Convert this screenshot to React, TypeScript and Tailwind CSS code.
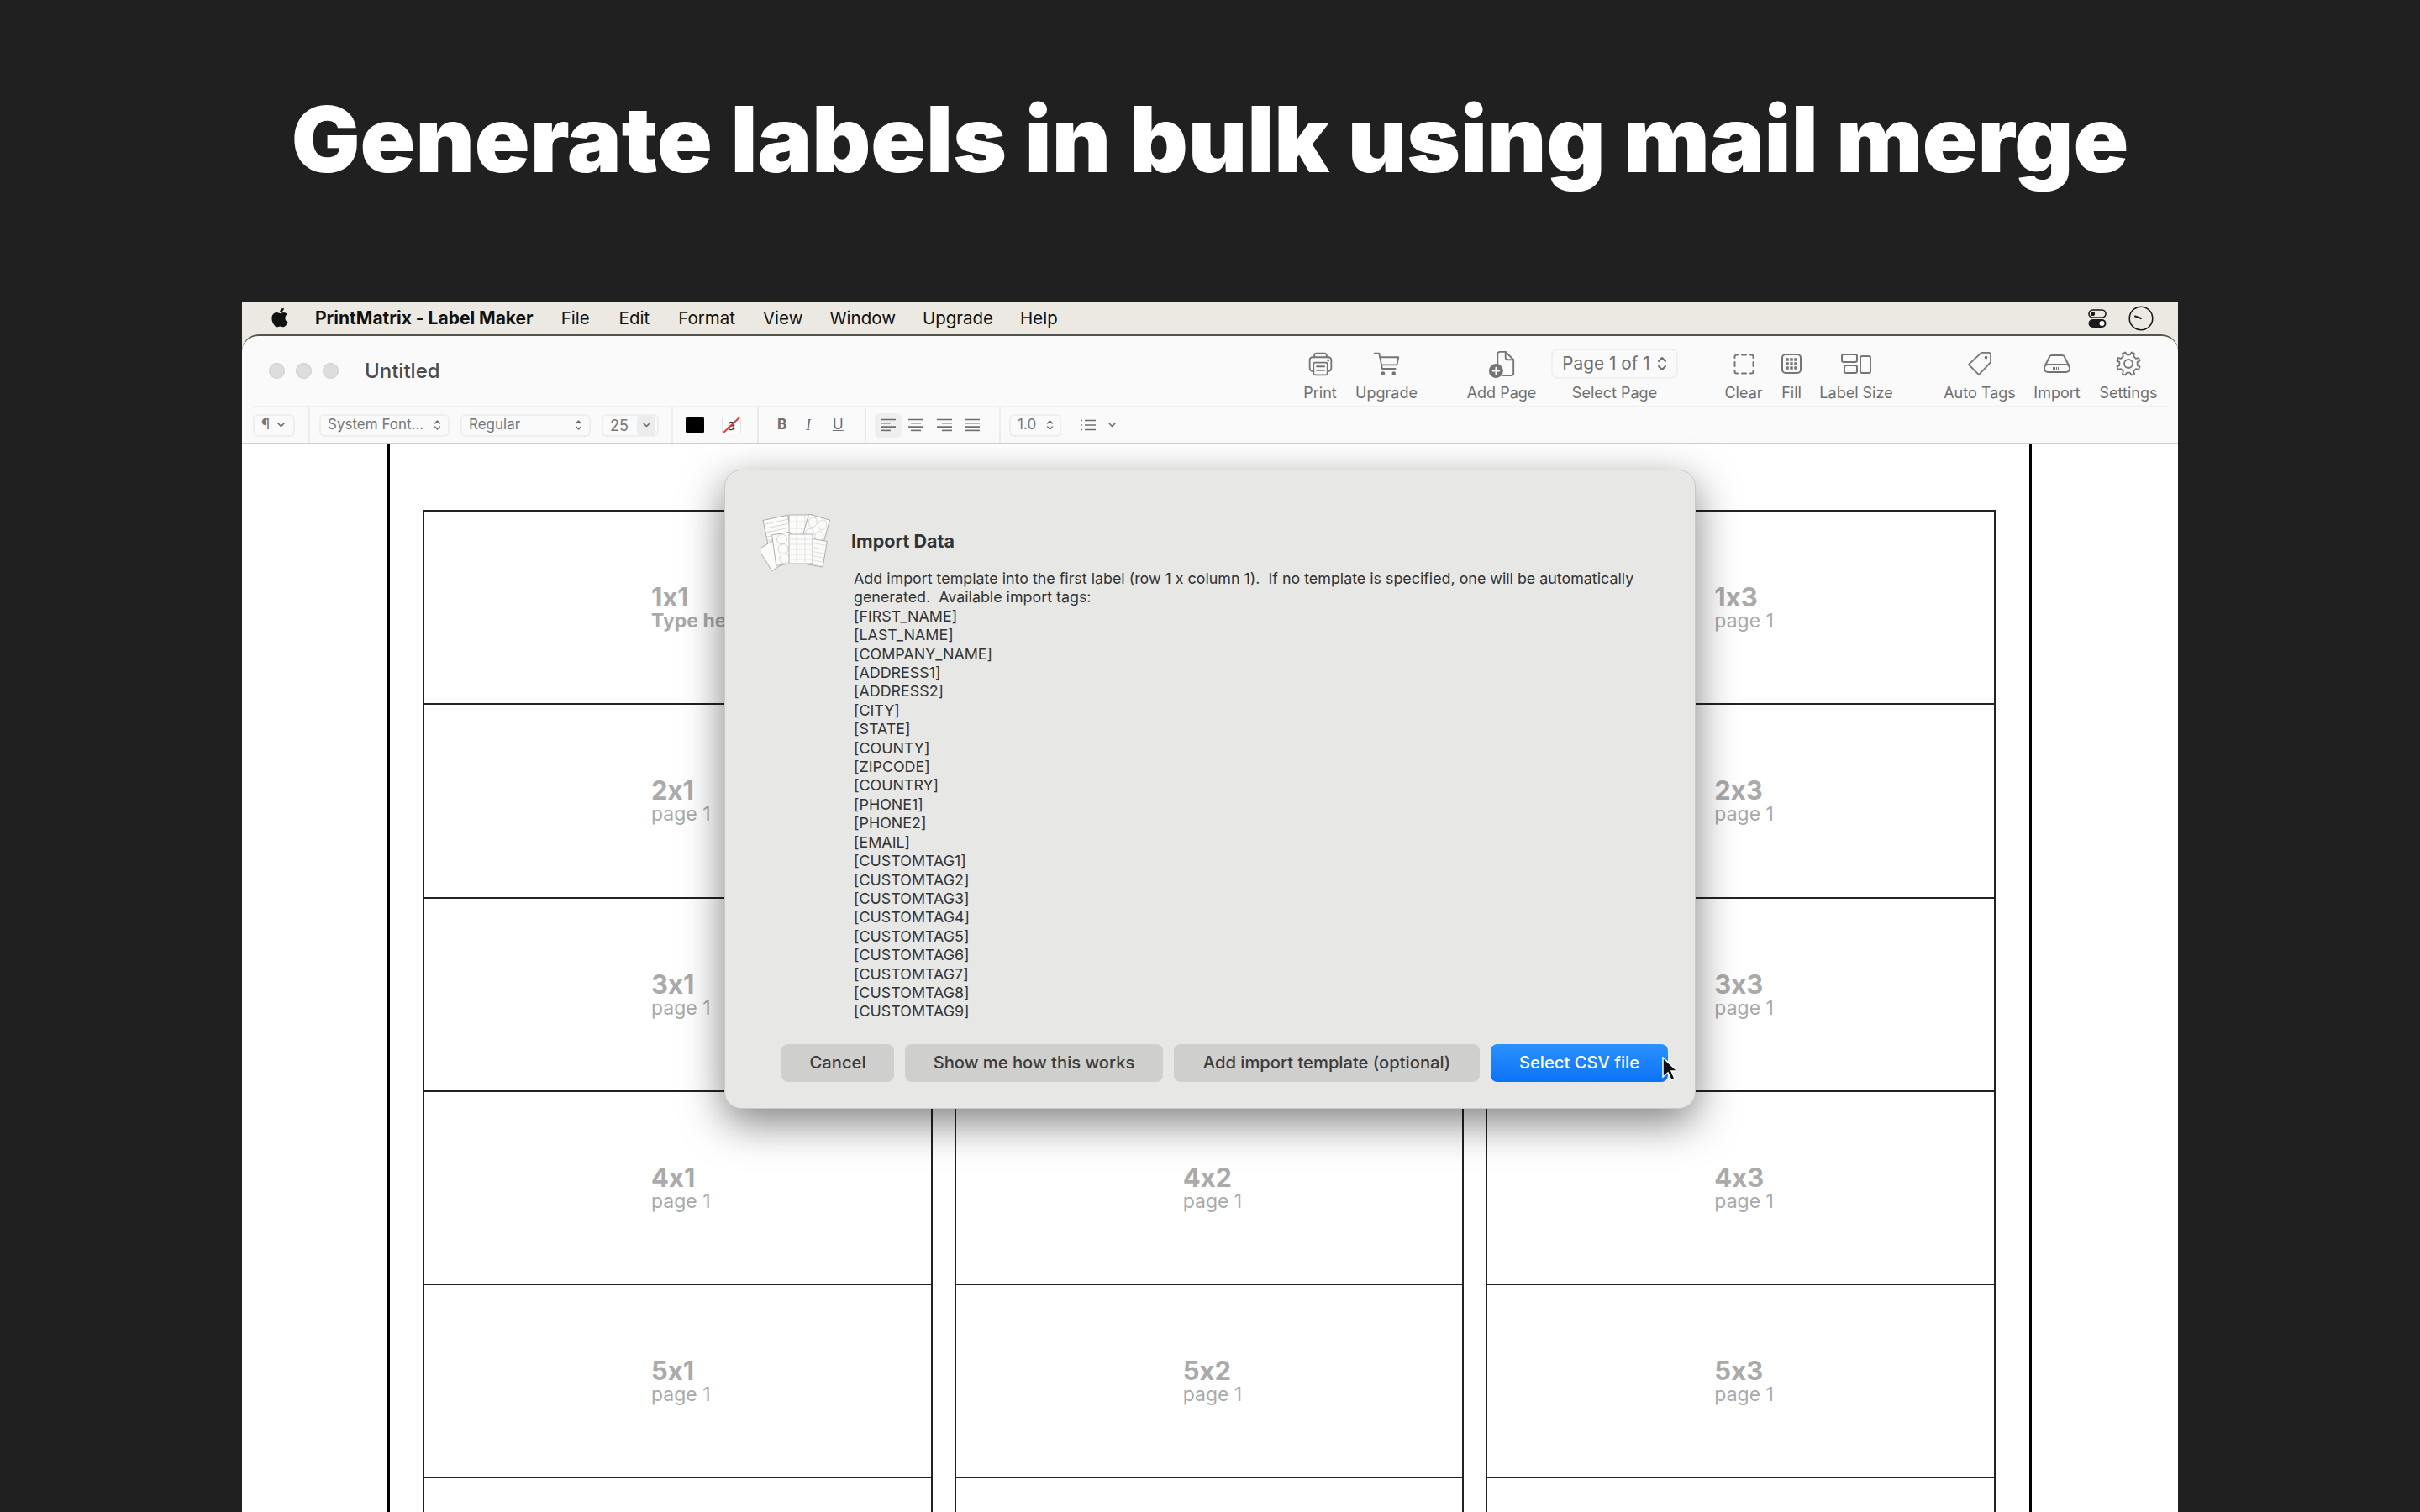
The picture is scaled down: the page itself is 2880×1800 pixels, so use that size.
import { FaApple } from "react-icons/fa";

const sans = "font-['Inter','Liberation_Sans',sans-serif] [font-feature-settings:'calt'_0]";

const menuItems = [
  { name: "File", cls: "ml-[33px]" },
  { name: "Edit", cls: "ml-[35px]" },
  { name: "Format", cls: "ml-[34px]" },
  { name: "View", cls: "ml-[33px]" },
  { name: "Window", cls: "ml-[32px]" },
  { name: "Upgrade", cls: "ml-[32px]" },
  { name: "Help", cls: "ml-[32px]" },
];

const tags = [
  "FIRST_NAME", "LAST_NAME", "COMPANY_NAME", "ADDRESS1", "ADDRESS2", "CITY", "STATE", "COUNTY",
  "ZIPCODE", "COUNTRY", "PHONE1", "PHONE2", "EMAIL", "CUSTOMTAG1", "CUSTOMTAG2", "CUSTOMTAG3",
  "CUSTOMTAG4", "CUSTOMTAG5", "CUSTOMTAG6", "CUSTOMTAG7", "CUSTOMTAG8", "CUSTOMTAG9",
];

const rows = [1, 2, 3, 4, 5];
const cols = [1, 2, 3];

// 8 toothed gear outline, same look as the toolbar's settings symbol
const gearPoints = Array.from({ length: 8 }, (_, i) => {
  const a = (i * Math.PI) / 4 - Math.PI / 8;
  return [
    [10.8, a - 0.22],
    [14, a - 0.13],
    [14, a + 0.13],
    [10.8, a + 0.22],
  ]
    .map(([r, t]) => `${(15 + r * Math.cos(t)).toFixed(2)},${(15 + r * Math.sin(t)).toFixed(2)}`)
    .join(" ");
}).join(" ");

function Stroke({ children, w = 36, h = 36, vb = "0 0 36 36", sw = 2 }: { children: React.ReactNode; w?: number; h?: number; vb?: string; sw?: number }) {
  return (
    <svg width={w} height={h} viewBox={vb} fill="none" stroke="#757575" strokeWidth={sw} strokeLinecap="round" strokeLinejoin="round">
      {children}
    </svg>
  );
}

function UpDown({ small = false }: { small?: boolean }) {
  return (
    <svg width={small ? 9 : 12} height={small ? 14 : 22} viewBox="0 0 12 20" fill="none" stroke="#6a6a6a" strokeWidth={2} strokeLinecap="round" strokeLinejoin="round">
      <path d="M2 7l4-4 4 4M2 13l4 4 4-4" />
    </svg>
  );
}

function Chevron() {
  return (
    <svg width={9} height={6} viewBox="0 0 9 6" fill="none" stroke="#6a6a6a" strokeWidth={1.6} strokeLinecap="round" strokeLinejoin="round">
      <path d="M1 1l3.5 3.5L8 1" />
    </svg>
  );
}

function ToolItem({ label, cls, children }: { label: string; cls: string; children: React.ReactNode }) {
  return (
    <div className={`flex flex-col items-center ${cls}`}>
      <div className="h-[36px] flex items-center justify-center">{children}</div>
      <span className="mt-[5px] text-[18px] leading-[24px] text-[#6f6f6f] whitespace-nowrap">{label}</span>
    </div>
  );
}

function VDivider() {
  return <div className="w-[2px] h-full bg-[#ececec]" />;
}

function Popup({ cls, text, textCls = "text-[17px]", children }: { cls: string; text: string; textCls?: string; children: React.ReactNode }) {
  return (
    <div className={`h-[27px] flex items-center justify-between rounded-[6px] border-2 border-[#efefef] text-[#777777] ${cls}`}>
      <span className={`pl-[8px] whitespace-nowrap ${textCls}`}>{text}</span>
      {children}
    </div>
  );
}

function AlignIcon({ lines }: { lines: [number, number][] }) {
  return (
    <svg width={18} height={18} viewBox="0 0 18 18" stroke="#6e6e6e" strokeWidth={1.6}>
      {lines.map(([a, b], i) => (
        <path key={i} d={`M${a} ${2.5 + i * 4.3}H${b}`} />
      ))}
    </svg>
  );
}

function SheetsIcon() {
  const hLines = [0, 1, 2, 3, 4, 5];
  return (
    <svg width={82} height={68} viewBox="0 0 82 68" stroke="#a0a0a0" strokeWidth={0.8} fill="#fbfbfa">
      <g transform="rotate(-12 20 20)">
        <rect x="5" y="4" width="30" height="34" />
        {hLines.map((i) => <path key={i} d={`M5 ${9 + i * 5}H35`} stroke="#d2d2d2" />)}
      </g>
      <rect x="33" y="1" width="28" height="30" />
      <path d="M42 1V31M52 1V31M33 9H61M33 17H61" stroke="#dedede" />
      <g transform="rotate(16 65 18)">
        <rect x="52" y="3" width="26" height="30" />
        <ellipse cx="59" cy="11" rx="5" ry="6" fill="none" stroke="#d0d0d0" />
        <ellipse cx="71" cy="11" rx="5" ry="6" fill="none" stroke="#d0d0d0" />
        <ellipse cx="59" cy="25" rx="5" ry="6" fill="none" stroke="#d0d0d0" />
        <ellipse cx="71" cy="25" rx="5" ry="6" fill="none" stroke="#d0d0d0" />
      </g>
      <g transform="rotate(-32 14 49)">
        <rect x="3" y="34" width="22" height="30" />
      </g>
      <g transform="rotate(10 63 45)">
        <rect x="50" y="30" width="26" height="31" />
        {hLines.map((i) => <path key={i} d={`M50 ${35 + i * 5}H76`} stroke="#dadada" />)}
      </g>
      <g transform="rotate(-8 26 41)">
        <rect x="15" y="23" width="22" height="37" />
        {[0, 1, 2].map((i) => <circle key={i} cx="26" cy={30 + i * 11.500} r="6" fill="none" stroke="#cccccc" />)}
      </g>
      <rect x="33" y="24" width="28" height="35" />
      <path d="M42 24V59M52 24V59M33 30H61M33 36H61M33 42H61M33 48H61M33 54H61" stroke="#dedede" />
    </svg>
  );
}

function LabelCell({ row, col }: { row: number; col: number }) {
  const typed = row === 1 && col === 1;
  return (
    <div className="h-[232.3px] -mt-[2px] border-2 border-[#222222] pl-[270px] pt-[85px] bg-white">
      {row <= 5 && (
        <>
          <div className="text-[31px] leading-[33px] font-bold text-[#aaaaaa]">{row}x{col}</div>
          <div className={`text-[23px] leading-[26px] -mt-[1px] text-[#aaaaaa] ${typed ? "font-bold" : "font-normal"}`}>{typed ? "Type here" : "page 1"}</div>
        </>
      )}
    </div>
  );
}

export default function App() {
  return (
    <div className={`h-[1800px] overflow-hidden bg-[#202020] flex flex-col ${sans}`}>
      <h1 className="h-[360px] pt-[103px] text-center text-white font-black text-[108.500px] leading-[126px] whitespace-nowrap">
        Generate labels in bulk using mail merge
      </h1>

      <div className="mx-[288px] flex-1 min-h-0 flex flex-col bg-[#ebe9e2]">
        {/* mac menu bar */}
        <div className="h-[38px] shrink-0 flex items-center pl-[32px] pr-[30px] text-[20.500px] text-[#111111]">
          <FaApple className="text-[26px] text-[#111111] -mt-[3px]" />
          <span className="ml-[29px] text-[21px] font-bold">PrintMatrix - Label Maker</span>
          {menuItems.map((m) => (
            <span key={m.name} className={m.cls}>{m.name}</span>
          ))}
          <div className="ml-auto flex items-center">
            <svg width={22} height={22} viewBox="0 0 22 22">
              <rect x="1" y="1" width="20" height="9" rx="4.500" fill="none" stroke="#1a1a1a" strokeWidth={1.6} />
              <circle cx="5.500" cy="5.500" r="2.600" fill="#1a1a1a" />
              <rect x="0.500" y="12" width="21" height="10" rx="5" fill="#1a1a1a" />
              <circle cx="16.500" cy="17" r="3" fill="#ffffff" />
            </svg>
            <svg className="ml-[26px] mr-[-1px]" width={30} height={30} viewBox="0 0 30 30" fill="none" stroke="#1a1a1a">
              <circle cx="15" cy="15" r="13.800" strokeWidth={1.6} />
              <path d="M15 15L8 12.500" strokeWidth={2} strokeLinecap="round" />
            </svg>
          </div>
        </div>

        {/* window */}
        <div className="flex-1 min-h-0 flex flex-col rounded-t-[20px] bg-[#fafafa] border-t-2 border-[#55544f] relative overflow-hidden">
          <div className="mx-[13px] h-[85px] shrink-0 flex items-center border-b-2 border-[#f0f0f0]">
            <div className="flex items-center gap-[13px] pl-[19px]">
              <span className="w-[19px] h-[19px] rounded-full bg-[#dddddd] border border-[#cccccc]" />
              <span className="w-[19px] h-[19px] rounded-full bg-[#dddddd] border border-[#cccccc]" />
              <span className="w-[19px] h-[19px] rounded-full bg-[#dddddd] border border-[#cccccc]" />
            </div>
            <span className="ml-[31px] text-[24px] font-medium text-[#4b4b4b]">Untitled</span>

            <div className="ml-auto mt-[12px] flex pr-[1px]">
              <ToolItem label="Print" cls="w-[60px]">
                <Stroke w={33} h={33}>
                  <path d="M10 9V6.500A2.500 2.500 0 0 1 12.500 4h11A2.500 2.500 0 0 1 26 6.500V9" />
                  <path d="M9 27H7.500A3.500 3.500 0 0 1 4 23.500V12.500A3.500 3.500 0 0 1 7.500 9h21a3.500 3.500 0 0 1 3.500 3.500v11a3.500 3.500 0 0 1-3.500 3.500H27" />
                  <rect x="9" y="16" width="18" height="16" rx="2" />
                  <path d="M13 21h10M13 26h10" />
                  <circle cx="28" cy="13" r="0.600" fill="#757575" />
                </Stroke>
              </ToolItem>
              <ToolItem label="Upgrade" cls="ml-[9px] w-[80px]">
                <Stroke w={33} h={33}>
                  <path d="M2 4h6l4 20h17" />
                  <path d="M9 9h24l-2 10H11" />
                  <circle cx="13" cy="30" r="1.500" fill="#757575" />
                  <circle cx="27" cy="30" r="1.500" fill="#757575" />
                </Stroke>
              </ToolItem>
              <ToolItem label="Add Page" cls="ml-[47px] w-[100px]">
                <Stroke w={34} h={34}>
                  <path d="M13 20V6a3 3 0 0 1 3-3h7l10 10v17a3 3 0 0 1-3 3h-10" />
                  <path d="M23 3v7a3 3 0 0 0 3 3h7" />
                  <circle cx="11" cy="27" r="8" fill="#757575" />
                  <path d="M7 27h8M11 23v8" stroke="#ffffff" />
                </Stroke>
              </ToolItem>
              <div className="ml-[9px] w-[151px] flex flex-col items-center">
                <div className="h-[36px] w-full flex items-center justify-center gap-[8px] rounded-[8px] border-2 border-[#f0f0f0] text-[20.800px] text-[#6f6f6f]">
                  Page 1 of 1 <UpDown />
                </div>
                <span className="mt-[5px] text-[18px] leading-[24px] text-[#6f6f6f] whitespace-nowrap">Select Page</span>
              </div>
              <ToolItem label="Clear" cls="ml-[48px] w-[60px]">
                <Stroke w={25} h={25} vb="0 0 25 25">
                  <path d="M5 1.500H3.500A2 2 0 0 0 1.500 3.500V5M10 1.500h5M20 1.500h1.500a2 2 0 0 1 2 2V5M1.500 10v5M23.500 10v5M1.500 20v1.500a2 2 0 0 0 2 2H5M10 23.500h5M20 23.500h1.500a2 2 0 0 0 2-2V20" />
                </Stroke>
              </ToolItem>
              <ToolItem label="Fill" cls="ml-[7px] w-[40px]">
                <svg width={24} height={24} viewBox="0 0 24 24">
                  <rect x="1" y="1" width="22" height="22" rx="4" fill="none" stroke="#757575" strokeWidth={2} />
                  {[7, 12, 17].map((y) =>
                    [7, 12, 17].map((x) => <rect key={`${x}-${y}`} x={x - 1.75} y={y - 1.75} width={3.5} height={3.5} fill="#757575" />)
                  )}
                </svg>
              </ToolItem>
              <ToolItem label="Label Size" cls="ml-[7px] w-[100px]">
                <Stroke w={36} h={24} vb="0 0 36 24">
                  <rect x="1" y="1" width="18" height="9" rx="2" />
                  <rect x="4" y="14" width="15" height="9" rx="2" />
                  <rect x="23" y="3" width="12" height="20" rx="2" />
                </Stroke>
              </ToolItem>
              <ToolItem label="Auto Tags" cls="ml-[47px] w-[100px]">
                <Stroke w={30} h={30} vb="0 0 32 32">
                  <path d="M19 2h8a3 3 0 0 1 3 3v8a3 3 0 0 1-1 2L15 30 2 17 17 3a3 3 0 0 1 2-1z" />
                  <circle cx="24" cy="8" r="1" fill="#757575" />
                </Stroke>
              </ToolItem>
              <ToolItem label="Import" cls="ml-[7px] w-[70px]">
                <Stroke w={32} h={24} vb="0 0 32 24">
                  <path d="M1 16L7 4a3 3 0 0 1 3-2h12a3 3 0 0 1 3 2l6 12" />
                  <rect x="1" y="13" width="30" height="9" rx="4" />
                  <path d="M11 17.500h10" strokeDasharray="1 1" strokeLinecap="butt" strokeWidth={3} />
                </Stroke>
              </ToolItem>
              <ToolItem label="Settings" cls="ml-[5px] w-[90px]">
                <Stroke w={30} h={30} vb="0 0 30 30" sw={1.8}>
                  <circle cx="15" cy="15" r="5" />
                  <polygon points={gearPoints} />
                </Stroke>
              </ToolItem>
            </div>
          </div>

          {/* format bar */}
          <div className="h-[44px] shrink-0 flex items-stretch border-b-2 border-[#cfcfcf] pl-[13px]">
            <div className="flex items-center pr-[16px]">
              <Popup cls="w-[50px] pr-[10px]" text="¶"><Chevron /></Popup>
            </div>
            <VDivider />
            <div className="flex items-center gap-[13px] pl-[11px] pr-[15px]">
              <Popup cls="w-[155px] pr-[8px]" text="System Font..."><UpDown small /></Popup>
              <Popup cls="w-[155px] pr-[8px]" text="Regular"><UpDown small /></Popup>
              <Popup cls="w-[68px] pr-[2px]" text="25" textCls="text-[18px]">
                <span className="w-[22px] h-[23px] rounded-[4px] bg-[#ececec] flex items-center justify-center"><Chevron /></span>
              </Popup>
            </div>
            <VDivider />
            <div className="flex items-center pl-[15px] pr-[19px] gap-[21px]">
              <span className="w-[22px] h-[20px] rounded-[3px] bg-black" />
              <span className="relative w-[23px] h-[20px] rounded-[3px] border border-[#e4e4e4] bg-white text-[17px] leading-[18px] text-center text-[#333333]">
                a
                <svg className="absolute inset-0" width={21} height={18} viewBox="0 0 21 18">
                  <path d="M1 18L20 0" stroke="#e8383a" strokeWidth={2} />
                </svg>
              </span>
            </div>
            <VDivider />
            <div className="flex items-center pl-[22px] text-[#6e6e6e] text-[17px]">
              <span className="w-[12px] font-bold">B</span>
              <span className="ml-[22px] w-[8px] italic font-['Liberation_Serif',serif] text-[18px]">I</span>
              <span className="ml-[24px] w-[12px] underline">U</span>
            </div>
            <div className="ml-[26px]"><VDivider /></div>
            <div className="flex items-center pl-[10px] pr-[23px]">
              <span className="w-[32px] h-[29px] rounded-[6px] bg-[#efefef] flex items-center justify-center">
                <AlignIcon lines={[[0, 18], [0, 12], [0, 18], [0, 12]]} />
              </span>
              <span className="ml-[8px]"><AlignIcon lines={[[0, 18], [3, 15], [0, 18], [3, 15]]} /></span>
              <span className="ml-[16px]"><AlignIcon lines={[[0, 18], [6, 18], [0, 18], [6, 18]]} /></span>
              <span className="ml-[15px]"><AlignIcon lines={[[0, 18], [0, 18], [0, 18], [0, 18]]} /></span>
            </div>
            <VDivider />
            <div className="flex items-center pl-[10px]">
              <Popup cls="w-[62px] pr-[7px]" text="1.0"><UpDown small /></Popup>
              <svg className="ml-[23px]" width={18} height={16} viewBox="0 0 18 16" stroke="#6e6e6e" strokeWidth={1.6}>
                <path d="M5 2.500H18M5 8H18M5 13.500H18" />
                <path d="M0 2.500H2M0 8H2M0 13.500H2" />
              </svg>
              <span className="ml-[15px]"><Chevron /></span>
            </div>
          </div>

          {/* page */}
          <div className="flex-1 min-h-0 bg-white overflow-hidden">
            <div className="ml-[173px] mr-[174px] h-full border-x-[3px] border-black pl-[39px] pr-[40px] pt-[80px]">
              <div className="grid grid-cols-3 gap-x-[26px]">
                {[...rows, 6].map((r) =>
                  cols.map((c) => <LabelCell key={`${r}-${c}`} row={r} col={c} />)
                )}
              </div>
            </div>
          </div>

          {/* import sheet */}
          <div className="absolute left-[574px] top-[159px] w-[1156px] h-[761px] rounded-[20px] bg-[#e7e7e5] border border-[#c9c9c7] shadow-[0_16px_50px_rgba(0,0,0,0.5)] text-[#333333]">
            <div className="flex pl-[43px] pt-[52px]">
              <SheetsIcon />
              <div className="ml-[25px] pt-[20px] text-[21.500px] leading-[24px] font-bold">Import Data</div>
            </div>
            <div className="ml-[153px] -mt-[2px] w-[950px] text-[17.850px] leading-[22.400px]">
              <p className="whitespace-pre-wrap">Add import template into the first label (row 1 x column 1).  If no template is specified, one will be automatically generated.  Available import tags:</p>
              {tags.map((t) => (
                <div key={t}>[{t}]</div>
              ))}
            </div>
            <div className="absolute left-[67px] top-[683px] flex gap-[13px] text-[20.200px] font-medium text-[#3c3c3c]">
              <button className="w-[134px] h-[45px] rounded-[8px] bg-[#cfcfcd]">Cancel</button>
              <button className="w-[307px] h-[45px] rounded-[8px] bg-[#cfcfcd]">Show me how this works</button>
              <button className="w-[364px] h-[45px] rounded-[8px] bg-[#cfcfcd]">Add import template (optional)</button>
              <button className="w-[211px] h-[45px] rounded-[8px] bg-gradient-to-b from-[#2b91ff] to-[#0a72f6] text-white">Select CSV file</button>
            </div>
            <svg className="absolute left-[1114px] top-[698px]" width={18} height={30} viewBox="0 0 18 30">
              <path d="M2 1v23l6-5 4 9 4-2-4-9h7z" fill="#111111" stroke="#ffffff" strokeWidth={1.500} />
            </svg>
          </div>
        </div>
      </div>
    </div>
  );
}
